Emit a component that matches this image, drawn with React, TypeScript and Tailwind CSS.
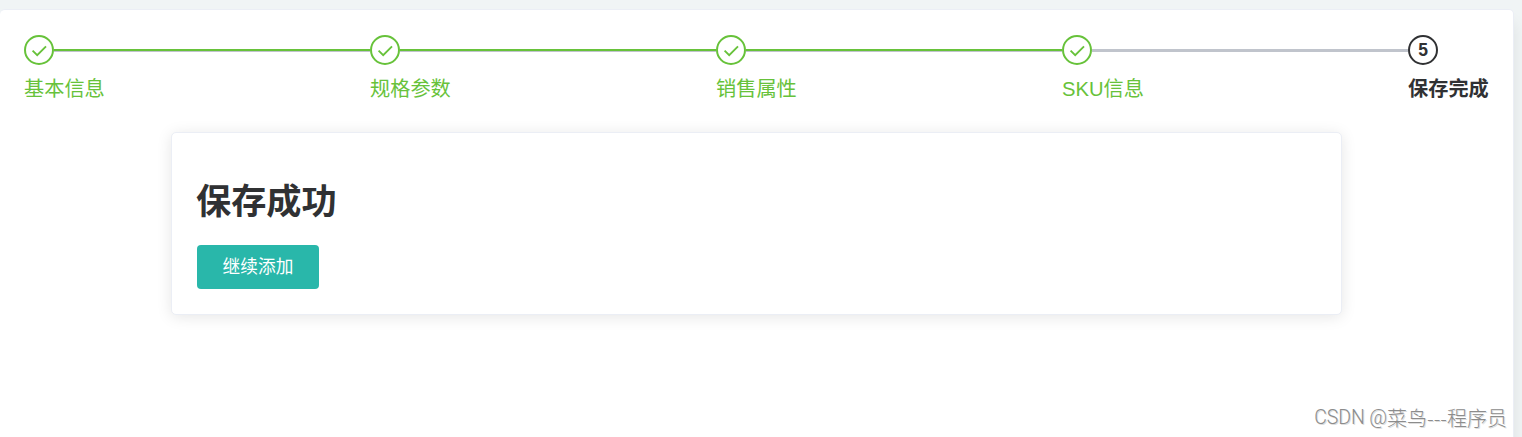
const steps = [
  { title: '基本信息', done: true },
  { title: '规格参数', done: true },
  { title: '销售属性', done: true },
  { title: 'SKU信息', done: true },
  { title: '保存完成', done: false },
];

function Check() {
  return (
    <svg className="mt-0.5 h-4 w-4 shrink-0" viewBox="0 0 16 16" fill="none" stroke="#67c23a" strokeWidth="1.9">
      <path d="M1.6 7.6 L6.2 12.1 L15 3.3" />
    </svg>
  );
}

function Connector({ done }: { done: boolean }) {
  return (
    <div className="h-[3px] flex-1 bg-[#c0c4cc]">
      {done && <div className="h-[2px] bg-[#67c23a]" />}
    </div>
  );
}

function Steps() {
  return (
    <div className="flex">
      {steps.map((step, i) => {
        const last = i === steps.length - 1;
        return (
          <div key={step.title} className={last ? 'w-[81px] shrink-0' : 'flex-1'}>
            <div className="flex h-[30px] items-center">
              <div
                className={`flex size-[30px] shrink-0 items-center justify-center rounded-full border-2 text-[17.5px] font-bold ${
                  step.done ? 'border-[#67c23a]' : 'border-[#303133] text-[#303133]'
                }`}
              >
                {step.done ? <Check /> : i + 1}
              </div>
              {!last && <Connector done={i < 3} />}
            </div>
            <div
              className={`h-[47px] whitespace-nowrap text-[20.2px] leading-[48px] ${
                step.done ? 'text-[#67c23a]' : 'font-bold text-[#303133]'
              }`}
            >
              {step.title}
            </div>
          </div>
        );
      })}
    </div>
  );
}

export default function App() {
  return (
    <div className="relative h-[437px] overflow-hidden bg-[#f0f4f5] pt-[9px] pr-2 font-['Liberation_Sans','Noto_Sans_CJK_SC',sans-serif]">
      <main className="h-[480px] rounded-[5px] border border-l-0 border-[#ebeef5] bg-white pt-[25px] pr-6 pl-6 shadow-[0_13px_15px_rgba(0,0,0,0.08)]">
        <Steps />
        <section className="mt-5 ml-[147px] h-[183px] w-[1171px] rounded-[5px] border border-[#ebeef5] bg-white px-[25px] shadow-[0_2px_15px_rgba(0,0,0,0.1)]">
          <h1 className="-ml-px h-[94px] pt-[43px] text-[35.2px] leading-[52px] font-bold text-[#303133]">保存成功</h1>
          <button className="mt-[18px] flex h-11 w-[122px] items-center justify-center rounded-[4px] bg-[#29b7aa] text-[17.7px] text-white">
            继续添加
          </button>
        </section>
      </main>
      <div className="absolute right-[15px] bottom-1 flex items-center font-['Noto_Sans_CJK_SC',sans-serif] text-[20px] leading-[30px] font-light whitespace-nowrap text-[#8c8c8c] [text-shadow:1px_1px_0_#ddd]">
        <span className="font-['Roboto',sans-serif] text-[19.5px] tracking-[-0.1px] whitespace-pre">CSDN @</span>
        <span>菜鸟---程序员</span>
      </div>
    </div>
  );
}
